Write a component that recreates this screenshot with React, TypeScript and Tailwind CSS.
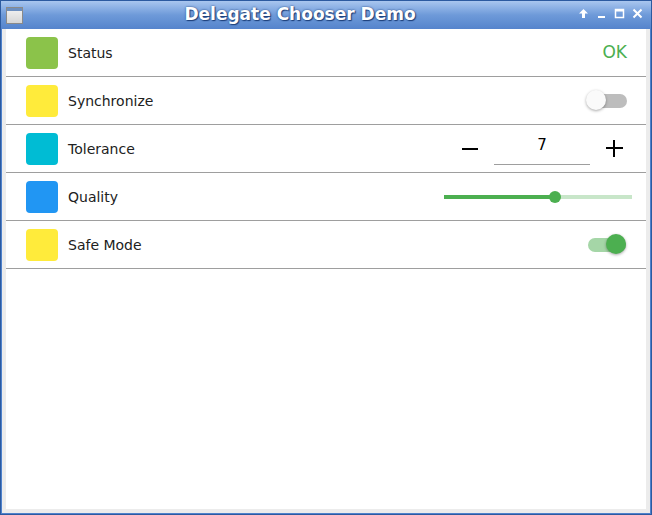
import React from 'react';

const FONT = { fontFamily: '"DejaVu Sans", "Liberation Sans", sans-serif' };

type Row = { label: string; color: string };

const Swatch: React.FC<{ color: string }> = ({ color }) => (
  <div className="w-[32px] h-[32px] rounded-[4px] shrink-0" style={{ backgroundColor: color }} />
);

const Toggle: React.FC<{ on: boolean }> = ({ on }) => (
  <div className="relative w-[40px] h-[22px] flex items-center">
    <div className={`w-[38px] h-[14px] rounded-full ml-[1px] ${on ? 'bg-[#a5d6a7]' : 'bg-[#bdbdbd]'}`} />
    <div
      className={`absolute top-0 w-[20px] h-[20px] rounded-full shadow-[0_1px_3px_rgba(0,0,0,0.35)] ${
        on ? 'left-[19px] bg-[#4caf50]' : 'left-[-2px] bg-[#fafafa]'
      }`}
    />
  </div>
);

const Separator = () => <div className="h-px bg-[#9e9e9e]" />;

export default function App() {
  const rows: Row[] = [
    { label: 'Status', color: '#8bc34a' },
    { label: 'Synchronize', color: '#ffeb3b' },
    { label: 'Tolerance', color: '#00bcd4' },
    { label: 'Quality', color: '#2196f3' },
    { label: 'Safe Mode', color: '#ffeb3b' },
  ];

  const control = (i: number) => {
    switch (i) {
      case 0:
        return <span className="text-[17px] text-[#4caf50] mr-[19px]">OK</span>;
      case 1:
        return <div className="mr-[18px]"><Toggle on={false} /></div>;
      case 2:
        return (
          <div className="flex items-center mr-[23px]">
            <span className="w-[16px] h-[2px] bg-black" />
            <div className="ml-[16px] w-[96px] h-[40px] flex flex-col items-center">
              <div className="h-[36px] w-full border-b border-[#9e9e9e] flex items-start justify-center pt-[5px] text-[15px] text-black">
                7
              </div>
            </div>
            <div className="relative ml-[16px] w-[17px] h-[17px]">
              <span className="absolute left-0 top-[7px] w-[17px] h-[2px] bg-black" />
              <span className="absolute left-[7px] top-0 w-[2px] h-[17px] bg-black" />
            </div>
          </div>
        );
      case 3:
        return (
          <div className="relative w-[188px] h-[14px] flex items-center mr-[14px]">
            <div className="h-[4px] w-[111px] bg-[#4caf50]" />
            <div className="h-[4px] flex-1 bg-[#c8e6c9]" />
            <div className="absolute left-[105px] top-[1px] w-[12px] h-[12px] rounded-full bg-[#4caf50]" />
          </div>
        );
      default:
        return <div className="mr-[19px]"><Toggle on /></div>;
    }
  };

  return (
    <div className="w-[652px] h-[515px] flex flex-col bg-[#2c5aa0] p-px" style={FONT}>
      <div className="h-[28px] relative flex items-center justify-center bg-gradient-to-b from-[#a9c6ef] via-[#6e9ad9] to-[#5584cc]">
        <div className="absolute left-[5px] top-[6px] w-[17px] h-[17px] border border-[#8a8a8a] bg-gradient-to-b from-[#f4f4f4] to-[#d6d6d6]">
          <div className="h-[3px] bg-[#6d8fbf]" />
        </div>
        <span className="text-white font-bold text-[17px] [text-shadow:0_0_2px_#1c3f7a,1px_1px_1px_#1c3f7a] ml-[-52px]">
          Delegate Chooser Demo
        </span>
        <div className="absolute right-[8px] top-[7px] flex items-center gap-[7px] text-white">
          <svg width="11" height="11" viewBox="0 0 11 11">
            <path d="M5.5 1 L10 5.5 H7 V10 H4 V5.5 H1 Z" fill="white" />
          </svg>
          <svg width="11" height="11" viewBox="0 0 11 11">
            <rect x="2" y="8" width="7" height="2" fill="white" />
          </svg>
          <svg width="11" height="11" viewBox="0 0 11 11">
            <rect x="1.5" y="1.5" width="8" height="8" fill="none" stroke="white" strokeWidth="1.5" />
            <rect x="1.5" y="1.5" width="8" height="2" fill="white" />
          </svg>
          <svg width="11" height="11" viewBox="0 0 11 11">
            <path d="M1.5 1.5 L9.5 9.5 M9.5 1.5 L1.5 9.5" stroke="white" strokeWidth="2" />
          </svg>
        </div>
      </div>
      <div className="flex-1 bg-[#4f82cc] px-px pb-px flex">
        <div className="flex-1 bg-[#ececec] px-[4px] pb-[4px] flex">
          <div className="flex-1 bg-white flex flex-col">
            {rows.map((r, i) => (
              <div key={r.label}>
                <div className="h-[47px] flex items-center pl-[20px]">
                  <Swatch color={r.color} />
                  <span className="ml-[10px] pt-[2px] text-[14px] text-[#212121]">{r.label}</span>
                  <div className="ml-auto flex items-center">{control(i)}</div>
                </div>
                <Separator />
              </div>
            ))}
          </div>
        </div>
      </div>
    </div>
  );
}
